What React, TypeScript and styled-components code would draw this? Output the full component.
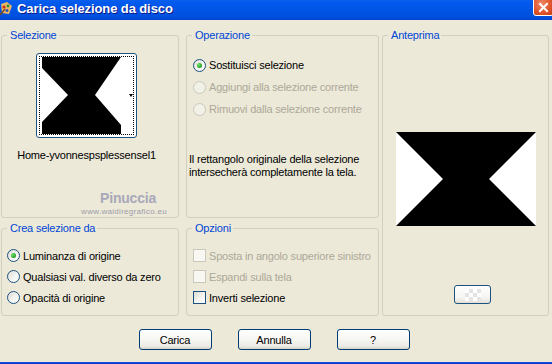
import React from 'react';
import styled, { createGlobalStyle } from 'styled-components';

const GlobalStyle = createGlobalStyle`
    html, body {
        margin: 0;
        padding: 0;
    }
    body {
        background: #ECE9D8;
        font-family: 'Liberation Sans', Arial, sans-serif;
        font-size: 11px;
        letter-spacing: -0.2px;
        color: #000000;
    }
`;

const Window = styled.div`
    width: 552px;
    height: 364px;
    display: flex;
    flex-direction: column;
    overflow: hidden;
    background: #ECE9D8;
`;

const TitleBar = styled.div`
    height: 20px;
    flex: none;
    display: flex;
    align-items: flex-start;
    overflow: hidden;
    background: linear-gradient(to bottom, #0A60EC 0%, #0058EE 15%, #0054E3 55%, #0050DD 85%, #0043CF 100%);
`;

const TitleIcon = styled.svg`
    flex: none;
    margin: 1px 4px 0 0;
`;

const TitleText = styled.div`
    flex: 1;
    color: #FFFFFF;
    font-family: 'Liberation Sans', Arial, sans-serif;
    font-weight: 700;
    font-size: 13px;
    line-height: 17px;
    letter-spacing: -0.1px;
    text-shadow: 1px 1px 0 #0A1888;
`;

const CloseButton = styled.div`
    flex: none;
    width: 21px;
    height: 21px;
    margin-top: -5px;
    margin-right: -2px;
    box-sizing: border-box;
    border: 1px solid #FFFFFF;
    border-radius: 3px;
    background: radial-gradient(circle at 40% 40%, #F08A68 0%, #E0552C 55%, #C43A12 100%);
    display: flex;
    align-items: center;
    justify-content: center;
    padding-top: 4px;
`;

const Content = styled.div`
    flex: 1;
    padding: 9px 0 0 1px;
    display: flex;
    flex-direction: column;
`;

const MainRow = styled.div`
    display: flex;
    align-items: flex-start;
`;

const Column = styled.div<{ width: number, offset?: number }>`
    width: ${props => props.width}px;
    margin-left: ${props => props.offset ? props.offset : 0}px;
    display: flex;
    flex-direction: column;
    gap: 4px;
`;

const Group = styled.fieldset<{ h: number }>`
    margin: 0;
    padding: 0;
    min-width: 0;
    height: ${props => props.h}px;
    box-sizing: border-box;
    border: 1px solid #D0D0BF;
    border-radius: 3px;
`;

const Legend = styled.legend`
    margin-left: 5px;
    padding: 0 2px 0 3px;
    color: #0046D5;
    font-size: 11px;
    line-height: 13px;
`;

const SelectionBody = styled.div`
    display: flex;
    flex-direction: column;
    align-items: center;
    padding-right: 7px;
`;

const Thumb = styled.div`
    margin-top: 11px;
    width: 101px;
    height: 85px;
    box-sizing: border-box;
    border: 1px solid #1C5180;
    border-radius: 3px;
    padding: 2px;
    background: #FFFFFF;
`;

const ThumbInner = styled.div`
    width: 93px;
    height: 77px;
    border: 1px dotted #000000;
`;

const FileName = styled.div`
    margin-top: 11px;
    line-height: 13px;
`;

const Watermark = styled.div`
    align-self: flex-end;
    margin-top: 29px;
    margin-right: 4px;
    display: flex;
    flex-direction: column;
    align-items: center;
    color: #A8A8BA;
`;

const WatermarkName = styled.div`
    font-family: 'Liberation Sans', Arial, sans-serif;
    font-weight: 700;
    font-size: 14px;
    line-height: 14px;
    letter-spacing: -0.2px;
    margin-left: 8px;
`;

const WatermarkSite = styled.div`
    font-size: 8px;
    line-height: 8px;
    margin-top: 3px;
    color: #9C9CA8;
    letter-spacing: 0.3px;
`;

const OptionList = styled.div<{ top: number, left: number, rowH: number }>`
    padding-top: ${props => props.top}px;
    padding-left: ${props => props.left}px;
    display: flex;
    flex-direction: column;
    & > div {
        height: ${props => props.rowH}px;
    }
`;

const OptionRow = styled.div<{ disabled?: boolean }>`
    display: flex;
    align-items: center;
    gap: 3px;
    color: ${props => props.disabled ? '#ACA899' : '#000000'};
    white-space: nowrap;
`;

const RadioCircle = styled.span<{ checked?: boolean, disabled?: boolean }>`
    flex: none;
    width: 13px;
    height: 13px;
    box-sizing: border-box;
    border-radius: 50%;
    border: 1px solid ${props => props.disabled ? '#CAC8BB' : '#1C5180'};
    background: ${props => props.disabled ? '#F2F1E8' : 'linear-gradient(135deg, #DCDCD5 0%, #F2F2EE 50%, #FFFFFF 100%)'};
    display: flex;
    align-items: center;
    justify-content: center;
    &::after {
        content: '';
        display: ${props => props.checked ? 'block' : 'none'};
        width: 5px;
        height: 5px;
        border-radius: 50%;
        background: radial-gradient(circle at 35% 35%, #6FE06B 0%, #2BAA2B 60%, #1C8A1C 100%);
    }
`;

const CheckBox = styled.span<{ disabled?: boolean }>`
    flex: none;
    width: 13px;
    height: 13px;
    box-sizing: border-box;
    border: 1px solid ${props => props.disabled ? '#CAC8BB' : '#1C5180'};
    background: ${props => props.disabled ? '#F8F7F2' : 'linear-gradient(135deg, #DCDCD5 0%, #F2F2EE 50%, #FFFFFF 100%)'};
`;

const Description = styled.div`
    margin-top: 33px;
    padding-left: 2px;
    line-height: 13px;
`;

const PreviewBody = styled.div`
    display: flex;
    flex-direction: column;
    align-items: center;
`;

const PreviewImage = styled.svg`
    margin-top: 90px;
    display: block;
`;

const SmallButton = styled.div`
    margin-top: 59px;
    margin-left: 14px;
    width: 37px;
    height: 19px;
    box-sizing: border-box;
    border: 1px solid #1C5180;
    border-radius: 3px;
    background: linear-gradient(to bottom, #FFFFFF 0%, #F4F4F0 70%, #E2E0D8 100%);
    display: flex;
    align-items: center;
    justify-content: center;
`;

const Checker = styled.span`
    width: 16px;
    height: 12px;
    background: repeating-conic-gradient(#E4E4E4 0% 25%, #FFFFFF 0% 50%) 0 0 / 8px 8px;
`;

const ButtonRow = styled.div`
    margin-top: 13px;
    display: flex;
    justify-content: center;
    gap: 26px;
    padding-right: 5px;
`;

const Button = styled.button`
    width: 73px;
    height: 21px;
    padding: 0;
    box-sizing: border-box;
    border: 1px solid #003C74;
    border-radius: 3px;
    background: linear-gradient(to bottom, #FFFFFF 0%, #F6F6F2 50%, #ECEBE5 85%, #D8D2C6 100%);
    font-family: 'Liberation Sans', Arial, sans-serif;
    font-size: 11px;
    letter-spacing: -0.2px;
    color: #000000;
`;

const BottomFrame = styled.div`
    height: 2px;
    flex: none;
    background: linear-gradient(to bottom, #1A56E0, #0A2FC8);
`;

class App extends React.Component {
    render() {
        return (
            <Window>
                <GlobalStyle />
                <TitleBar>
                    <TitleIcon width="13" height="15" viewBox="0 0 13 15">
                        <path d="M1 3 L7 1 L12 5 L9 13 L2 12 Z" fill="#E8B860" />
                        <circle cx="4" cy="6" r="1.6" fill="#D03020" />
                        <circle cx="8" cy="5" r="1.4" fill="#2A8A3A" />
                        <circle cx="7" cy="9.5" r="1.5" fill="#3050C0" />
                        <path d="M0 14 L5 8" stroke="#7A4A20" strokeWidth="1.5" />
                    </TitleIcon>
                    <TitleText>Carica selezione da disco</TitleText>
                    <CloseButton>
                        <svg width="11" height="11" viewBox="0 0 11 11">
                            <path d="M2 2 L9 9 M9 2 L2 9" stroke="#FFFFFF" strokeWidth="2" strokeLinecap="square" />
                        </svg>
                    </CloseButton>
                </TitleBar>

                <Content>
                    <MainRow>
                        <Column width={178}>
                            <Group h={189}>
                                <Legend>Selezione</Legend>
                                <SelectionBody>
                                    <Thumb>
                                        <ThumbInner>
                                            <svg width="93" height="77" viewBox="0 0 93 77" style={{ display: 'block' }}>
                                                <rect width="93" height="77" fill="#FFFFFF" />
                                                <polygon points="2,0 81,0 55,38 81,68 81,77 2,77 2,65 28,38 2,11" fill="#000000" />
                                                <polygon points="89,37 93,37 91,40" fill="#000000" />
                                            </svg>
                                        </ThumbInner>
                                    </Thumb>
                                    <FileName>Home-yvonnespsplessensel1</FileName>
                                    <Watermark>
                                        <WatermarkName>Pinuccia</WatermarkName>
                                        <WatermarkSite>www.waidiregrafico.eu</WatermarkSite>
                                    </Watermark>
                                </SelectionBody>
                            </Group>
                            <Group h={94}>
                                <Legend>Crea selezione da</Legend>
                                <OptionList top={10} left={5} rowH={21}>
                                    <OptionRow><RadioCircle checked />Luminanza di origine</OptionRow>
                                    <OptionRow><RadioCircle />Qualsiasi val. diverso da zero</OptionRow>
                                    <OptionRow><RadioCircle />Opacità di origine</OptionRow>
                                </OptionList>
                            </Group>
                        </Column>

                        <Column width={193} offset={7}>
                            <Group h={189}>
                                <Legend>Operazione</Legend>
                                <OptionList top={12} left={6} rowH={22}>
                                    <OptionRow><RadioCircle checked />Sostituisci selezione</OptionRow>
                                    <OptionRow disabled><RadioCircle disabled />Aggiungi alla selezione corrente</OptionRow>
                                    <OptionRow disabled><RadioCircle disabled />Rimuovi dalla selezione corrente</OptionRow>
                                </OptionList>
                                <Description>
                                    Il rettangolo originale della selezione<br />
                                    intersecherà completamente la tela.
                                </Description>
                            </Group>
                            <Group h={94}>
                                <Legend>Opzioni</Legend>
                                <OptionList top={10} left={6} rowH={21}>
                                    <OptionRow disabled><CheckBox disabled />Sposta in angolo superiore sinistro</OptionRow>
                                    <OptionRow disabled><CheckBox disabled />Espandi sulla tela</OptionRow>
                                    <OptionRow><CheckBox />Inverti selezione</OptionRow>
                                </OptionList>
                            </Group>
                        </Column>

                        <Column width={167} offset={3}>
                            <Group h={287}>
                                <Legend>Anteprima</Legend>
                                <PreviewBody>
                                    <PreviewImage width="140" height="94" viewBox="0 0 140 94">
                                        <rect width="140" height="94" fill="#FFFFFF" />
                                        <polygon points="0,0 140,0 93,47 140,94 0,94 47,47" fill="#000000" />
                                    </PreviewImage>
                                    <SmallButton><Checker /></SmallButton>
                                </PreviewBody>
                            </Group>
                        </Column>
                    </MainRow>

                    <ButtonRow>
                        <Button>Carica</Button>
                        <Button>Annulla</Button>
                        <Button>?</Button>
                    </ButtonRow>
                </Content>
                <BottomFrame />
            </Window>
        );
    }
}

export default App;
